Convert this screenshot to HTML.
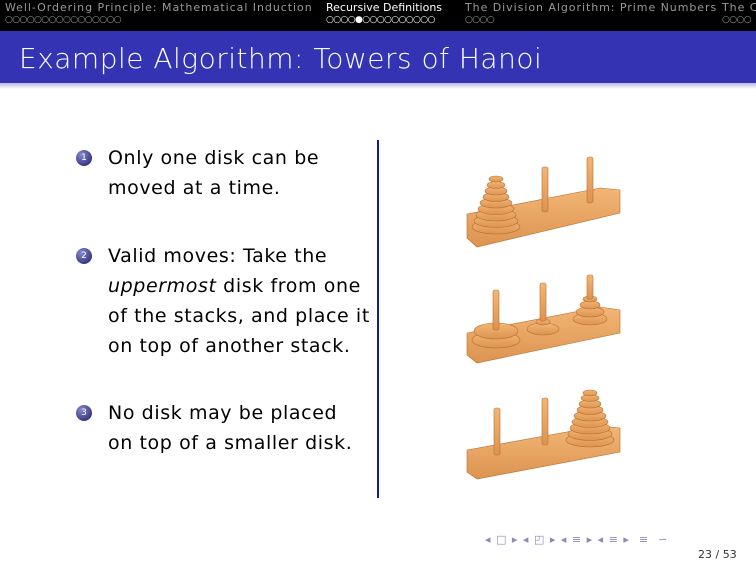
<!DOCTYPE html>
<html><head><meta charset="utf-8"><style>
body{margin:0;width:756px;height:567px;overflow:hidden;background:#fff;font-family:"DejaVu Sans","Liberation Sans",sans-serif;position:relative}
.hdr{position:absolute;left:0;top:0;width:756px;height:31px;background:#000;font-size:11px;color:#999;white-space:nowrap;overflow:hidden;letter-spacing:0.95px}
.hdr span{position:absolute;top:1px}
.dots{position:absolute;top:15px;font-size:9px;letter-spacing:-0.6px;color:#999}
.band{position:absolute;left:0;top:31px;width:756px;height:52px;background:#3333b3}
.shade{position:absolute;left:0;top:83px;width:756px;height:6px;background:linear-gradient(#b8b8dc,#fff)}
.title{position:absolute;left:19px;top:42px;font-size:28px;color:#fff;font-weight:200;letter-spacing:0.5px}
.item{position:absolute;left:108px;font-size:19px;line-height:30px;color:#000;letter-spacing:0.6px}
.ball{position:absolute;left:76px;width:16px;height:16px;border-radius:50%;background:radial-gradient(circle at 35% 30%,#8888cc,#1a1a66);color:#fff;font-size:9px;text-align:center;line-height:16px}
.vl{position:absolute;left:377px;top:140px;width:2px;height:358px;background:#1a1a8c}
.pg{position:absolute;left:698px;top:548px;font-size:11px;color:#333}
.nav{position:absolute;left:485px;top:533px;font-size:11px;color:#8a8ab8;letter-spacing:1px}
</style></head><body>
<div class="hdr">
<span style="left:5px">Well-Ordering Principle: Mathematical Induction</span>
<span style="left:326px;color:#fff;letter-spacing:0">Recursive Definitions</span>
<span style="left:465px">The Division Algorithm: Prime Numbers</span>
<span style="left:722px">The C</span>
<div class="dots" style="left:5px">○○○○○○○○○○○○○○○○</div>
<div class="dots" style="left:326px;color:#fff">○○○○●○○○○○○○○○○</div>
<div class="dots" style="left:465px">○○○○</div>
<div class="dots" style="left:722px">○○○○</div>
</div>
<div class="band"></div><div class="shade"></div>
<div class="title">Example Algorithm: Towers of Hanoi</div>
<div class="ball" style="top:150px">1</div>
<div class="item" style="top:143px">Only one disk can be<br>moved at a time.</div>
<div class="ball" style="top:248px">2</div>
<div class="item" style="top:241px">Valid moves: Take the<br><i>uppermost</i> disk from one<br>of the stacks, and place it<br>on top of another stack.</div>
<div class="ball" style="top:405px">3</div>
<div class="item" style="top:398px">No disk may be placed<br>on top of a smaller disk.</div>
<div class="vl"></div>
<svg style="position:absolute;left:0;top:0" width="756" height="567">
<defs><linearGradient id="w" x1="0" y1="0" x2="0" y2="1"><stop offset="0" stop-color="#f2b676"/><stop offset="1" stop-color="#dd9350"/></linearGradient></defs>
<g fill="url(#w)" stroke="#b86e2c" stroke-width="0.6">
<polygon points="467,214 600,188 620,190 620,213 477,247 467,238"/>
<rect x="542" y="167" width="6" height="45" rx="2"/>
<rect x="587" y="157" width="6" height="46" rx="2"/>
<ellipse cx="496" cy="227" rx="24" ry="7"/><ellipse cx="496" cy="221" rx="22" ry="6.5"/><ellipse cx="496" cy="215" rx="20" ry="6"/><ellipse cx="496" cy="209" rx="18" ry="5.5"/><ellipse cx="496" cy="203" rx="16" ry="5"/><ellipse cx="496" cy="197" rx="13" ry="4.5"/><ellipse cx="496" cy="191" rx="11" ry="4"/><ellipse cx="496" cy="185" rx="9" ry="3.5"/><ellipse cx="496" cy="179" rx="7" ry="3"/>
<polygon points="467,333 600,307 620,310 620,333 477,363 467,355"/>
<ellipse cx="496" cy="340" rx="24" ry="8"/><ellipse cx="496" cy="331" rx="22" ry="8"/>
<rect x="493" y="290" width="6" height="40" rx="2"/>
<ellipse cx="543" cy="329" rx="16" ry="6"/><ellipse cx="543" cy="322" rx="7" ry="3"/>
<rect x="540" y="283" width="6" height="38" rx="2"/>
<ellipse cx="590" cy="319" rx="17" ry="6"/><ellipse cx="590" cy="312" rx="14" ry="5"/><ellipse cx="590" cy="305" rx="10" ry="4"/><ellipse cx="590" cy="299" rx="7" ry="3"/>
<rect x="587" y="275" width="6" height="24" rx="2"/>
<polygon points="467,450 600,426 620,428 620,452 477,479 467,472"/>
<rect x="494" y="408" width="6" height="47" rx="2"/>
<rect x="542" y="398" width="6" height="47" rx="2"/>
<ellipse cx="590" cy="440" rx="24" ry="7"/><ellipse cx="590" cy="434" rx="22" ry="6.5"/><ellipse cx="590" cy="428" rx="20" ry="6"/><ellipse cx="590" cy="422" rx="18" ry="5.5"/><ellipse cx="590" cy="416" rx="16" ry="5"/><ellipse cx="590" cy="410" rx="13" ry="4.5"/><ellipse cx="590" cy="404" rx="11" ry="4"/><ellipse cx="590" cy="398" rx="9" ry="3.5"/><ellipse cx="590" cy="393" rx="7" ry="3"/>
</g>
</svg>
<div class="nav">◂ □ ▸ ◂ ◰ ▸ ◂ ≡ ▸ ◂ ≡ ▸ &nbsp;≡ &nbsp;∽</div>
<div class="pg">23 / 53</div>
</body></html>
